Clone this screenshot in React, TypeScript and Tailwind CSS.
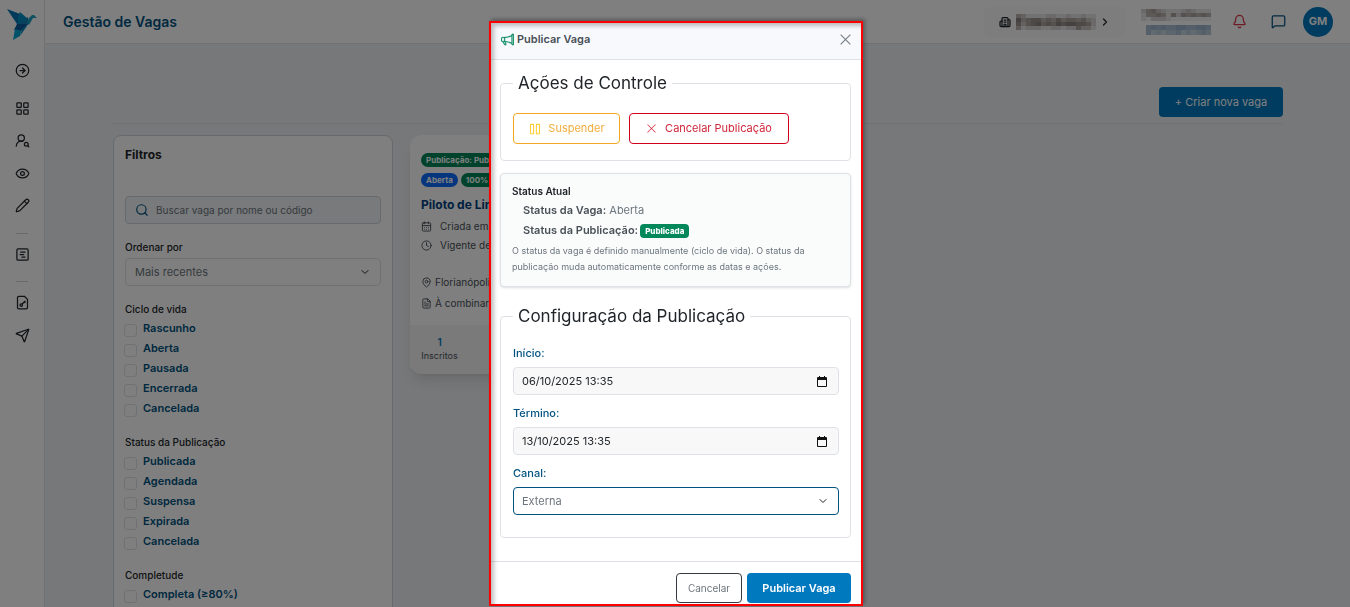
import React from "react";
import {
  Bell, Building2, CalendarDays, ChevronDown, ChevronRight, CircleArrowRight, Clock, Eye,
  FileText, LayoutGrid, MapPin, MessageSquare, Pencil, Search, Send, SquareChartGantt, UserRoundSearch,
} from "lucide-react";
import { BsMegaphone, BsXLg } from "react-icons/bs";
import { PiPause } from "react-icons/pi";

function Logo() {
  return (
    <svg viewBox="0 0 30 32" className="h-8 w-[30px]" aria-hidden="true">
      <path d="M0 0 13 5 13 15 10 15Z" fill="#0077b6" />
      <path d="M13 3 21 10 11 16 11 8Z" fill="#0090c5" />
      <path d="M10 15 21 15 14 22 7 21Z" fill="#0a5c9c" />
      <path d="M11 15 21 8 22 15Z" fill="#0e83b8" />
      <path d="M22 9 25 6 27 6 30 9 26 9 22 16 20 14Z" fill="#1ba3c6" />
      <path d="M22 14 13 27 15 20Z" fill="#0086bd" />
      <path d="M8 20 14 22 13 27 6 31Z" fill="#00a5d2" />
    </svg>
  );
}

function FileKeyIcon() {
  return (
    <svg viewBox="0 0 24 24" width={15} height={15} fill="none" stroke="currentColor" strokeWidth={2} strokeLinecap="round" strokeLinejoin="round" aria-hidden="true">
      <path d="M15 2H6a2 2 0 0 0-2 2v16a2 2 0 0 0 2 2h12a2 2 0 0 0 2-2V7Z" />
      <circle cx="10" cy="16" r="2" />
      <path d="m16 10-4.5 4.5" />
      <path d="m15 11 1 1" />
    </svg>
  );
}

const orgCells = [
  "4577776677677677", "1432243424334356", "2532132312112236", "4766677667663557",
];
const nameCells = ["64356777656777", "74434736343434", "78666788888888"];
const roleCells = ["4343443344334", "4656554656545"];
const greys = ["#707070", "#868482", "#98928e", "#a9a29c", "#b8b2ae", "#c8c3c0", "#d6d3d2", "#e6e5e4", "#f3f3f3"];
const blues = ["#6f8ba5", "#8099b0", "#8fa8bf", "#9db4ca", "#a9bed2", "#b8cad9", "#c8d6e1", "#d9e3ea", "#e9eff3"];

function Mosaic({ rows, shades, cell }: { rows: string[]; shades: string[]; cell: number }) {
  const w = rows[0].length * 5;
  const h = rows.length * cell;
  return (
    <svg viewBox={`0 0 ${w} ${h}`} width={w} height={h} aria-hidden="true" shapeRendering="crispEdges">
      {rows.map((row, y) =>
        row.split("").map((c, x) => (
          <rect key={`${x}-${y}`} x={x * 5} y={y * cell} width={5} height={cell} fill={shades[Number(c)]} />
        )),
      )}
    </svg>
  );
}

function Sidebar() {
  const link = "flex h-4 w-4 items-center justify-center text-[#212529]";
  return (
    <nav className="flex w-[45px] shrink-0 flex-col items-center border-r border-[#dee2e6] bg-white pt-[9px]">
      <Logo />
      <a href="#expandir" aria-label="Expandir" className={`${link} mt-[21px]`}><CircleArrowRight size={15} /></a>
      <a href="#painel" aria-label="Painel" className={`${link} mt-[22px]`}><LayoutGrid size={15} /></a>
      <a href="#candidatos" aria-label="Candidatos" className={`${link} mt-4`}><UserRoundSearch size={15} /></a>
      <a href="#visualizar" aria-label="Visualizar" className={`${link} mt-[17px]`}><Eye size={15} /></a>
      <a href="#editar" aria-label="Editar" className={`${link} mt-4`}><Pencil size={15} /></a>
      <hr className="mt-5 w-3 border-[#d0d4d8]" />
      <a href="#vagas" aria-label="Vagas" className={`${link} mt-3`}><SquareChartGantt size={15} /></a>
      <hr className="mt-[19px] w-3 border-[#d0d4d8]" />
      <a href="#acessos" aria-label="Acessos" className={`${link} mt-3`}><FileKeyIcon /></a>
      <a href="#enviar" aria-label="Enviar" className={`${link} mt-[17px]`}><Send size={15} /></a>
    </nav>
  );
}

function Header() {
  return (
    <header className="flex h-11 shrink-0 items-center border-b border-[#dee2e6] bg-white pr-[17px] pl-[18px]">
      <h1 className="flex-1 text-[14px] leading-5 font-semibold text-[#005280]">Gestão de Vagas</h1>
      <button aria-label="Organização" className="flex h-[30px] w-[142px] items-center rounded-md bg-[#fafafa] pl-[15px] text-[#212529]">
        <Building2 size={12} strokeWidth={2.5} />
        <span className="mr-[3px] ml-[5px]"><Mosaic rows={orgCells} shades={greys} cell={4} /></span>
        <ChevronRight size={12} strokeWidth={2.5} />
      </button>
      <div className="ml-[15px] flex w-[70px] flex-col items-end gap-1">
        <Mosaic rows={nameCells} shades={greys} cell={4} />
        <Mosaic rows={roleCells} shades={blues} cell={5} />
      </div>
      <button aria-label="Notificações" className="ml-[21px] text-[#dc3545]"><Bell size={15} /></button>
      <button aria-label="Mensagens" className="ml-6 text-[#005280]"><MessageSquare size={15} /></button>
      <button className="ml-[17px] h-[30px] w-[30px] rounded-full bg-[#0079bf] text-[11px] font-bold text-white">GM</button>
    </header>
  );
}

function CheckGroup({ title, items }: { title: string; items: string[] }) {
  return (
    <fieldset className="mt-4">
      <legend className="text-[10px] leading-[17px] font-medium text-[#212529]">{title}</legend>
      {items.map((item) => (
        <label key={item} className="flex h-5 items-center text-[11px] font-semibold text-[#005280]">
          <input type="checkbox" className="mt-1 mr-[6px] -ml-px h-[13px] w-[13px] appearance-none rounded-[3px] border border-[#dee2e6] bg-white" />
          {item}
        </label>
      ))}
    </fieldset>
  );
}

function Filters() {
  return (
    <aside className="w-[280px] shrink-0 rounded-lg border border-[#ced4da] bg-white px-[11px] pt-[9px]">
      <h2 className="text-[12px] leading-5 font-bold text-[#212529]">Filtros</h2>
      <div className="mt-[31px] flex h-7 items-center rounded border border-[#ced4da] bg-[#f1f4f8] px-[9px] text-[#005280]">
        <Search size={14} />
        <input aria-label="Buscar vaga" placeholder="Buscar vaga por nome ou código" className="ml-[7px] flex-1 bg-transparent text-[10px] placeholder:text-[#6c757d]" />
      </div>
      <label htmlFor="ordem" className="mt-[15px] block text-[10px] leading-4 font-medium text-[#212529]">Ordenar por</label>
      <div className="mt-[3px] grid items-center">
        <select id="ordem" className="col-start-1 row-start-1 h-7 w-full appearance-none rounded border border-[#dee2e6] bg-white px-[9px] text-[11px] text-[#6c757d]">
          <option>Mais recentes</option>
        </select>
        <ChevronDown size={12} className="pointer-events-none col-start-1 row-start-1 mr-[10px] justify-self-end text-[#212529]" />
      </div>
      <div className="-mt-px">
        <CheckGroup title="Ciclo de vida" items={["Rascunho", "Aberta", "Pausada", "Encerrada", "Cancelada"]} />
        <CheckGroup title="Status da Publicação" items={["Publicada", "Agendada", "Suspensa", "Expirada", "Cancelada"]} />
        <CheckGroup title="Completude" items={["Completa (≥80%)"]} />
      </div>
    </aside>
  );
}

function JobCard() {
  const badge = "rounded-full px-[5px] text-[8px] leading-[14px] font-bold text-white";
  const row = "flex items-center text-[10px] leading-[19px] text-[#495057]";
  return (
    <article className="w-[280px] self-start overflow-hidden rounded-xl bg-white shadow-lg">
      <div className="px-[11px] pt-[18px] pb-3">
        <div className="flex"><span className={`${badge} bg-[#00875a]`}>Publicação: Publicada</span></div>
        <div className="mt-[6px] flex gap-[3px]">
          <span className={`${badge} bg-[#0d6efd]`}>Aberta</span>
          <span className={`${badge} bg-[#00875a]`}>100% completa</span>
        </div>
        <h3 className="mt-2 text-[12px] leading-5 font-bold text-[#004080]">Piloto de Linha Aérea</h3>
        <p className={`${row} mt-[2px]`}><CalendarDays size={11} className="mr-2" />Criada em 06/10/2025</p>
        <p className={row}><Clock size={11} className="mr-2" />Vigente de 06/10/2025</p>
        <p className={`${row} mt-[18px]`}><MapPin size={11} className="mr-[3px]" />Florianópolis</p>
        <p className={`${row} mt-[2px]`}><FileText size={11} className="mr-[3px]" />À combinar</p>
      </div>
      <div className="bg-[#f4f5f7] px-[11px] pt-[11px] pb-3">
        <p className="flex w-[37px] flex-col items-center text-[9px] leading-[13px] text-[#495057]">
          <b className="text-[10px] font-semibold text-[#0079bf]">1</b>Inscritos
        </p>
      </div>
    </article>
  );
}

function CalendarGlyph() {
  return (
    <svg viewBox="0 0 10 11" className="h-[11px] w-[10px]" aria-hidden="true">
      <path d="M1 1h8a1 1 0 0 1 1 1v8a1 1 0 0 1-1 1H1a1 1 0 0 1-1-1V2a1 1 0 0 1 1-1ZM1 4v6h8V4ZM2 0h1v1H2ZM7 0h1v1H7Z" fill="#111" fillRule="evenodd" />
    </svg>
  );
}

function DateField({ id, label, value }: { id: string; label: string; value: string }) {
  return (
    <div className="mb-2">
      <label htmlFor={id} className="block text-[11px] leading-5 font-medium text-[#005280]">{label}</label>
      <div className="mt-1 flex h-7 items-center rounded border border-[#dee2e6] bg-[#f8f8f8] pr-[11px] pl-2">
        <input id={id} defaultValue={value} className="min-w-0 flex-1 bg-transparent text-[11px] text-[#212529]" />
        <button type="button" aria-label={`Abrir calendário ${label}`}><CalendarGlyph /></button>
      </div>
    </div>
  );
}

function PublishDialog() {
  const box = "rounded border border-[#dee2e6]";
  const legend = "px-[5px] text-[17px] leading-[27px] text-[#212529]";
  return (
    <div className="fixed inset-0 flex items-start justify-center bg-black/50 pt-[21px] pl-0.5">
      <section role="dialog" aria-label="Publicar Vaga" className="relative w-[374px] border-2 border-[#ff0000] bg-white shadow-[2px_-2px_4px_rgba(0,0,0,0.3)]">
        <header className="flex h-[37px] items-center border-b border-[#dee2e6] bg-[#f8f9fc] pr-[9px] pb-[3px] pl-[10px]">
          <BsMegaphone size={13} strokeWidth={0.3} className="text-[#00875a]" />
          <h2 className="ml-[3px] flex-1 text-[11px] font-semibold text-[#495057]">Publicar Vaga</h2>
          <button aria-label="Fechar" className="text-[#6c757d]"><BsXLg size={13} strokeWidth={0.4} /></button>
        </header>
        <div className="pt-[10px] pr-[10px] pb-[23px] pl-[9px]">
          <fieldset className={`${box} px-3 pt-4 pb-4`}>
            <legend className={legend}>Ações de Controle</legend>
            <div className="flex gap-[9px]">
              <button className="flex h-[31px] w-[107px] items-center justify-center gap-[6px] rounded border border-[#f5a623] text-[11px] text-[#f0ad3d]">
                <PiPause size={14} className="text-[#ffc107]" />Suspender
              </button>
              <button className="flex h-[31px] w-[160px] items-center justify-center gap-2 rounded border border-[#d0021b] text-[11px] text-[#d0263a]">
                <BsXLg size={11} />Cancelar Publicação
              </button>
            </div>
          </fieldset>
          <div className={`${box} mt-3 bg-[#fafcfc] px-[11px] pt-[9px] pb-[11px] shadow-sm`}>
            <h3 className="text-[10px] leading-4 font-semibold text-[#212529]">Status Atual</h3>
            <p className="mt-px pl-[11px] text-[11px] leading-5 text-[#6c757d]"><b className="font-semibold text-[#495057]">Status da Vaga:</b> Aberta</p>
            <p className="flex items-center pl-[11px] text-[11px] leading-5 text-[#495057]">
              <b className="font-semibold">Status da Publicação:</b>
              <span className="mt-[2px] ml-[2px] rounded bg-[#00875a] px-[5px] text-[8px] leading-[14px] font-extrabold text-white">Publicada</span>
            </p>
            <p className="mt-[3px] text-[9px] leading-4 text-[#6c757d]">O status da vaga é definido manualmente (ciclo de vida). O status da publicação muda automaticamente conforme as datas e ações.</p>
          </div>
          <fieldset className={`${box} mt-4 pt-[13px] pr-[11px] pb-[22px] pl-3`}>
            <legend className={legend}>Configuração da Publicação</legend>
            <DateField id="inicio" label="Início:" value="06/10/2025 13:35" />
            <DateField id="termino" label="Término:" value="13/10/2025 13:35" />
            <label htmlFor="canal" className="block text-[11px] leading-5 font-medium text-[#005280]">Canal:</label>
            <div className="mt-1 grid items-center">
              <select id="canal" className="col-start-1 row-start-1 h-7 w-full appearance-none rounded border border-[#005280] bg-white px-2 text-[11px] text-[#6c757d]">
                <option>Externa</option>
              </select>
              <ChevronDown size={12} className="pointer-events-none col-start-1 row-start-1 mr-[10px] justify-self-end text-[#212529]" />
            </div>
          </fieldset>
        </div>
        <footer className="flex justify-end gap-[5px] border-t border-[#dee2e6] px-[10px] pt-[11px] pb-px">
          <button className="h-[30px] w-[66px] rounded border border-[#343a40] text-[10px] text-[#6c757d]">Cancelar</button>
          <button className="h-[30px] w-[104px] rounded bg-[#0079bf] text-[11px] font-semibold text-white">Publicar Vaga</button>
        </footer>
        <div className="pointer-events-none absolute inset-0 shadow-[inset_3px_3px_4px_rgba(0,0,0,0.25)]" />
      </section>
    </div>
  );
}

export default function App() {
  return (
    <div className="flex h-screen overflow-hidden bg-[#eef1f5] font-['Inter',sans-serif]">
      <Sidebar />
      <div className="flex min-w-0 flex-1 flex-col">
        <Header />
        <main className="min-h-0 flex-1 overflow-hidden pr-[67px] pl-[68px]">
          <div className="flex justify-end border-b border-[#dee2e6] pt-[43px] pb-[6px]">
            <button className="h-[30px] w-[124px] rounded bg-[#0079bf] text-[11px] text-white">+ Criar nova vaga</button>
          </div>
          <div className="mt-[11px] flex min-h-[500px] gap-[17px]">
            <Filters />
            <JobCard />
          </div>
        </main>
      </div>
      <PublishDialog />
    </div>
  );
}
